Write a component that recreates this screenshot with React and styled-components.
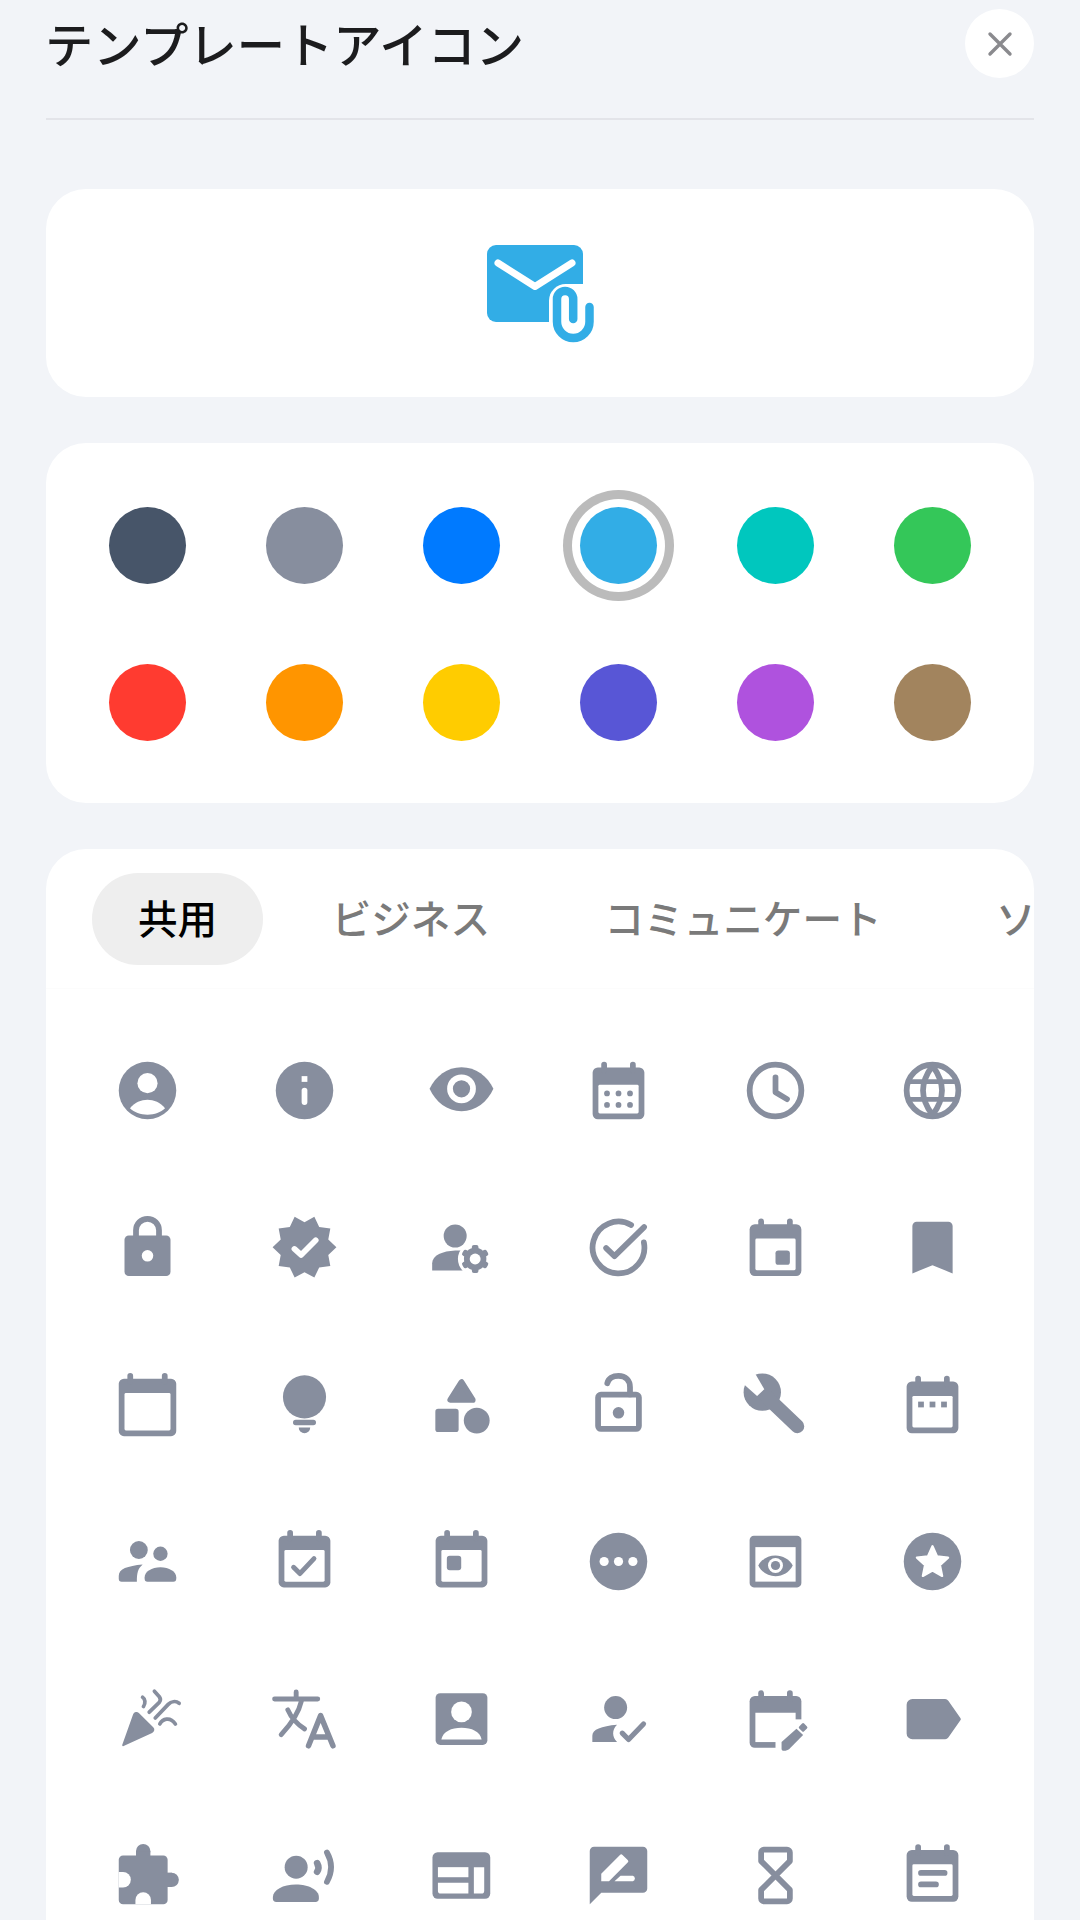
import React from "react";
import styled, { createGlobalStyle } from "styled-components";

const GlobalStyle = createGlobalStyle`
  html, body { margin: 0; padding: 0; background: #f2f4f8; }
  body { font-family: "Noto Sans CJK JP", "Noto Sans", sans-serif; }
`;

const Page = styled.div`
  width: 1080px;
  height: 1920px;
  box-sizing: border-box;
  padding: 0 46px;
  overflow: hidden;
  background: #f2f4f8;
`;
const Header = styled.header`
  height: 120px;
  box-sizing: border-box;
  display: flex;
  justify-content: space-between;
  align-items: flex-start;
  border-bottom: 2px solid #e3e4e9;
  margin-bottom: 69px;
`;
const Title = styled.h1`
  margin: 7px 0 0 -1px;
  font-size: 48.3px;
  line-height: 70px;
  font-weight: 500;
  color: #1c1c1e;
`;
const CloseButton = styled.button`
  width: 69px;
  height: 69px;
  margin-top: 9px;
  border: 0;
  padding: 0;
  border-radius: 50%;
  background: #fff;
  display: flex;
  align-items: center;
  justify-content: center;
`;
const Card = styled.section`
  background: #fff;
  border-radius: 40px;
  margin-bottom: 46px;
  overflow: hidden;
`;
const PreviewCard = styled(Card)`
  height: 208px;
  display: flex;
  align-items: center;
  justify-content: center;
`;
const SixGrid = styled.div`
  display: grid;
  grid-template-columns: repeat(6, 1fr);
  padding: 23px;
`;
const SwatchGrid = styled(SixGrid)`
  padding: 24px 23px 22px;
`;
const Cell = styled.div`
  aspect-ratio: 1;
  display: flex;
  align-items: center;
  justify-content: center;
`;
const Swatch = styled.div`
  width: 77px;
  height: 77px;
  border-radius: 50%;
  background: ${(p) => p.$color};
  box-shadow: ${(p) => (p.$selected ? "0 0 0 8px #fff, 0 0 0 17px #bbbbbb" : "none")};
`;
const Tabs = styled.nav`
  display: flex;
  gap: 22.5px;
  padding: 24px 46px 23px;
  border-bottom: 1px solid #fcfcfc;
  white-space: nowrap;
`;
const Tab = styled.div`
  flex: none;
  height: 92px;
  box-sizing: border-box;
  padding: 0 46px 6px;
  border-radius: 46px;
  display: flex;
  align-items: center;
  font-size: 39.6px;
  font-weight: 500;
  color: ${(p) => (p.$active ? "#000" : "#7a7a7a")};
  background: ${(p) => (p.$active ? "#eeeeee" : "transparent")};
`;
const Glyph = styled.svg`
  width: 69px;
  height: 69px;
  overflow: visible;
  flex: none;
`;

const G = "#878e9e";
const W = "#fff";

const Icon = ({ children }) => (
  <Glyph viewBox="0 0 24 24" fill={G}>
    {children}
  </Glyph>
);

const Cal = ({ top = 4, band = 5, children }) => (
  <>
    <rect x="3" y={top} width="18" height="18" rx="1.8" />
    <rect x="6" y={top - 2} width="2" height="4" rx="1" />
    <rect x="16" y={top - 2} width="2" height="4" rx="1" />
    <rect x="5" y={top + band} width="14" height={16 - band} rx="0.5" fill={W} />
    {children}
  </>
);

const Line = (props) => (
  <path fill="none" stroke={G} strokeWidth="2" strokeLinecap="round" strokeLinejoin="round" {...props} />
);

const polar = (cx, cy, n, R, r, start) => {
  const pts = [];
  for (let i = 0; i < n * 2; i++) {
    const a = start + (i * Math.PI) / n;
    const rad = i % 2 ? r : R;
    pts.push(`${(cx + rad * Math.cos(a)).toFixed(2)},${(cy + rad * Math.sin(a)).toFixed(2)}`);
  }
  return pts.join(" ");
};

const ICONS = [
  <>
    <circle cx="12" cy="12" r="10" />
    <circle cx="12" cy="9.45" r="3.5" fill={W} />
    <path fill={W} d="M5.9 18.2C7.5 16.2 9.8 15.25 12 15.25S16.5 16.2 18.1 18.2C16.6 19.6 14.5 20.4 12 20.4S7.4 19.6 5.9 18.2Z" />
  </>,
  <>
    <circle cx="12" cy="12" r="10" />
    <rect x="11" y="7" width="2" height="2" fill={W} />
    <rect x="11" y="11" width="2" height="6" rx="1" fill={W} />
  </>,
  <>
    <path d="M.9 11.4C3 7 7 3.9 12 3.9S21 7 23.1 11.4C21 16 17 19.2 12 19.2S3 16 .9 11.4Z" />
    <circle cx="12" cy="11.4" r="5" fill={W} />
    <circle cx="12" cy="11.4" r="3" />
  </>,
  <Cal band={6}>
    {[8, 12, 16].map((x) =>
      [13, 17].map((y) => <circle key={`${x}-${y}`} cx={x} cy={y} r="1" />)
    )}
  </Cal>,
  <>
    <circle cx="12" cy="12" r="9" fill="none" stroke={G} strokeWidth="2" />
    <Line d="M12 7.4V12.6L16 15" />
  </>,
  <>
    <circle cx="12" cy="12" r="9" fill="none" stroke={G} strokeWidth="2" />
    <Line d="M12 3.4C9.6 6.7 8.7 9.5 8.7 12S9.6 17.3 12 20.6C14.4 17.3 15.3 14.5 15.3 12S14.4 6.7 12 3.4Z" />
    <Line d="M3.7 8.9H20.3M3.7 15.1H20.3" strokeLinecap="butt" strokeWidth="1.7" />
  </>,
  <>
    <rect x="4" y="7.8" width="16" height="14.1" rx="1.5" />
    <path fill="none" stroke={G} strokeWidth="2" d="M8 9V6a4 4 0 0 1 8 0V9" />
    <circle cx="12" cy="14.9" r="2" fill={W} />
  </>,
  <>
    <polygon points={polar(12, 11.9, 10, 11.1, 8.7, 0)} strokeLinejoin="round" />
    <path fill="none" stroke={W} strokeWidth="2" strokeLinecap="round" strokeLinejoin="round" d="M8.5 12.5L10.8 14.6L15.9 9.5" />
  </>,
  <>
    <circle cx="9.8" cy="8" r="4" />
    <path d="M1.8 20V17.5C1.8 14.6 5.5 13.2 9.8 13H15V20H2.8Z" />
    <circle cx="16.75" cy="16" r="6" fill={W} />
    {[0, 60, 120].map((a) => (
      <rect key={a} x="15.6" y="11.1" width="2.3" height="9.8" rx="0.7" transform={`rotate(${a} 16.75 16)`} />
    ))}
    <circle cx="16.75" cy="16" r="3.9" />
    <circle cx="16.75" cy="16" r="1.9" fill={W} />
  </>,
  <>
    <Line d="M16.4 4.14A9 9 0 1 0 20.82 10.22" />
    <Line d="M7.7 12.2L10.6 15L20.9 4.9" />
  </>,
  <Cal top={3.9}>
    <rect x="12" y="13" width="5" height="5" rx="1" />
  </Cal>,
  <path d="M6.5 3H17.5A1.5 1.5 0 0 1 19 4.5V21L12 18.2L5 21V4.5A1.5 1.5 0 0 1 6.5 3Z" />,

  <>
    <rect x="2" y="3" width="20" height="20" rx="1.8" />
    <rect x="5" y="1" width="2" height="4" rx="1" />
    <rect x="17" y="1" width="2" height="4" rx="1" />
    <rect x="4" y="8" width="16" height="13" rx="0.5" fill={W} />
  </>,
  <>
    <circle cx="12" cy="9.35" r="7.5" />
    <rect x="8" y="17.3" width="8" height="1.9" rx="0.95" />
    <path d="M10 20H14A2 2 0 0 1 10 20Z" />
  </>,
  <>
    <polygon points="12,4.2 8.1,10.4 15.9,10.4" stroke={G} strokeWidth="2" strokeLinejoin="round" />
    <rect x="2.9" y="13.5" width="8.1" height="8.1" rx="1" />
    <circle cx="17.3" cy="17.6" r="4.5" />
  </>,
  <>
    <rect x="4.9" y="8.6" width="14.2" height="11.9" rx="1" fill="none" stroke={G} strokeWidth="2" />
    <circle cx="12" cy="14.9" r="2" />
    <Line d="M8.1 4.6C8.5 3 10 2 12 2C14.5 2 16 3.7 16 6V8.5" />
  </>,
  <>
    <circle cx="7.4" cy="7.7" r="6.5" />
    <polygon fill={W} points="0,4.1 5.6,9 8.1,6.7 4.2,0" />
    <Line d="M9 9.5L19.6 19.6" strokeWidth="4.8" />
  </>,
  <Cal>
    <rect x="7" y="11" width="2" height="2" />
    <rect x="11" y="11" width="2" height="2" />
    <rect x="15" y="11" width="2" height="2" />
  </Cal>,

  <>
    <circle cx="9" cy="8" r="3.1" />
    <circle cx="16.5" cy="9.3" r="2.5" />
    <path d="M2 18V17C2 14.5 5 13.5 10.3 13C8.6 14.5 8.3 16 8.3 19H3A1 1 0 0 1 2 18Z" />
    <path d="M11 17.5C11 15.5 13.5 14 16.5 14S22 15.5 22 17.5V18A1 1 0 0 1 21 19H12A1 1 0 0 1 11 18Z" />
  </>,
  <Cal top={3}>
    <Line d="M8.2 14L10.4 16.2L15.3 11" strokeWidth="1.7" />
  </Cal>,
  <Cal top={3}>
    <rect x="6.9" y="10" width="5" height="5" rx="1" />
  </Cal>,
  <>
    <circle cx="12" cy="12" r="10" />
    <circle cx="7" cy="12" r="1.6" fill={W} />
    <circle cx="12" cy="12" r="1.6" fill={W} />
    <circle cx="17" cy="12" r="1.6" fill={W} />
  </>,
  <>
    <rect x="3" y="3" width="18" height="18" rx="1.5" />
    <rect x="5" y="7" width="14" height="12" fill={W} />
    <path d="M6 13.4C7.2 11.2 9.5 9.9 12 9.9S16.8 11.2 18 13.4C16.8 15.8 14.5 17.1 12 17.1S7.2 15.8 6 13.4Z" />
    <circle cx="12" cy="13.4" r="2.6" fill={W} />
    <circle cx="12" cy="13.4" r="1.6" />
  </>,
  <>
    <circle cx="12" cy="12" r="10" />
    <polygon points={polar(12, 12.4, 5, 5.7, 2.7, -Math.PI / 2)} fill={W} stroke={W} strokeWidth="0.8" strokeLinejoin="round" />
  </>,

  <>
    <path d="M3.2 21.2L7 10.5A1.2 1.2 0 0 1 9 10.1L14 15A1.2 1.2 0 0 1 13.6 17L3.7 21.6A.4.4 0 0 1 3.2 21.2Z" />
    <g fill="none" stroke={G} strokeWidth="1.3" strokeLinecap="round" strokeLinejoin="round">
      <path d="M10.3 4.6C11.2 5.2 11.4 6.6 10.6 7.8" />
      <path d="M14.4 2.5L16.1 4.4C16.5 5 16.5 5.9 16.1 6.4L12.6 9.8" />
      <path d="M14.7 11.8L19.2 7.1C20.2 6.1 21.8 5.8 23 6.7" />
      <path d="M16.3 13.9C17.2 12.2 19.8 11.2 21.7 13.9" />
    </g>
  </>,
  <g fill="none" stroke={G} strokeWidth="1.7" strokeLinecap="round" strokeLinejoin="round">
    <path d="M1.6 5.2H16.6M9.1 2.8V5.2M10.9 6C10 10 8 13.2 3.9 17.6M6.2 9C7.5 12 9.5 14 12 15.6" />
    <path strokeWidth="1.9" d="M13.4 21.5L17.6 11L21.9 21.5M14.8 18.4H20.4" />
  </g>,
  <>
    <rect x="3" y="3.2" width="18" height="18" rx="1.6" />
    <circle cx="12" cy="9.7" r="3.6" fill={W} />
    <path fill={W} d="M5 19.3C5.5 16.5 8.5 15.2 12 15.2S18.5 16.5 19 19.3Z" />
  </>,
  <>
    <circle cx="11" cy="8.2" r="4" />
    <path d="M2.9 20.2V18C2.9 15.8 6 14.7 11.5 14.2C9.6 16 9.8 18.5 11.5 20.2Z" />
    <Line d="M13.3 17.1L15.5 19.3L20.7 13.9" strokeWidth="1.8" />
  </>,
  <>
    <rect x="3" y="4.2" width="18" height="18" rx="1.8" />
    <rect x="6" y="2.2" width="2" height="4" rx="1" />
    <rect x="16" y="2.2" width="2" height="4" rx="1" />
    <rect x="5" y="10" width="14" height="10.2" fill={W} />
    <rect x="12" y="12.3" width="11" height="11" fill={W} />
    <path d="M14.1 20.2L19.3 15.6L21.6 17.7L16.8 22.6C16 23.3 14.1 23.6 14.1 22.6Z" />
    <rect x="20.4" y="13.9" width="2.4" height="2.4" rx="0.5" transform="rotate(45 21.6 15.1)" />
  </>,
  <path d="M5 5.2H16.4A1.5 1.5 0 0 1 17.5 5.8L21.7 11.8A.6.6 0 0 1 21.7 12.6L17.5 18.6A1.5 1.5 0 0 1 16.4 19.2H5A2 2 0 0 1 3 17.2V7.2A2 2 0 0 1 5 5.2Z" />,

  <>
    <rect x="2" y="5" width="17" height="17" rx="1.5" />
    <circle cx="10.5" cy="3.5" r="2.5" />
    <circle cx="20.4" cy="13.5" r="2.5" />
    <rect x="8" y="3.5" width="5" height="3" />
    <rect x="17" y="11" width="3.4" height="5" />
    <path fill={W} d="M2 10.8H3.5A2.7 2.7 0 0 1 3.5 16.2H2Z" />
    <path fill={W} d="M7.8 22V20.5A2.7 2.7 0 0 1 13.2 20.5V22Z" />
  </>,
  <>
    <circle cx="9.1" cy="9.1" r="4" />
    <path d="M1 19.5C1 17 4.5 15.1 9 15.1S17 17 17 19.5V20A1.2 1.2 0 0 1 15.8 21.2H2.2A1.2 1.2 0 0 1 1 20Z" />
    <Line d="M16.4 7.7C17 8.8 17 9.8 16.4 10.7" strokeWidth="2.3" />
    <Line d="M19.8 4Q22.7 9.1 19.8 14.2" strokeWidth="2" />
  </>,
  <>
    <rect x="1.9" y="3.9" width="20.1" height="16.2" rx="1.8" />
    <rect x="3.8" y="9.1" width="10.6" height="3.5" fill={W} />
    <path fill={W} d="M3.8 14.5H14.4V18.3H4.8A1 1 0 0 1 3.8 17.3Z" />
    <path fill={W} d="M16.3 9.1H19.9V17.3A1 1 0 0 1 18.9 18.3H16.3Z" />
  </>,
  <>
    <path d="M2 22V3.5A1.5 1.5 0 0 1 3.5 2H20.5A1.5 1.5 0 0 1 22 3.5V16.5A1.5 1.5 0 0 1 20.5 18H6Z" />
    <path fill={W} d="M6 11.4L12.5 4.9A.6.6 0 0 1 13.4 4.9L15.2 6.6A.6.6 0 0 1 15.2 7.5L8.7 14H6Z" />
    <path fill={W} d="M10.6 14L12.7 12.1H17A1 1 0 0 1 17 14Z" />
  </>,
  <path
    fill="none"
    stroke={G}
    strokeWidth="2"
    strokeLinejoin="round"
    d="M8 3H16A1 1 0 0 1 17 4V7L7 17V20A1 1 0 0 0 8 21H16A1 1 0 0 0 17 20V17L7 7V4A1 1 0 0 1 8 3Z"
  />,
  <Cal top={3.1}>
    <Line d="M8 11.1H16.2M8 15.1H13.2" />
  </Cal>,
];

const SWATCHES = [
  "#475569", "#878e9e", "#007aff", "#32ade6", "#00c7be", "#34c759",
  "#ff3b30", "#ff9500", "#ffcc00", "#5856d6", "#af52de", "#a2845e",
];

const TABS = ["共用", "ビジネス", "コミュニケート", "ソーシャル"];

const PreviewIcon = () => (
  <svg width="120" height="106" viewBox="0 0 120 106">
    <rect x="7" y="5" width="96" height="77" rx="9" fill="#32ade6" />
    <path d="M18 23L55 46.5L92 23" fill="none" stroke="#fff" strokeWidth="7" strokeLinecap="round" strokeLinejoin="round" />
    <path d="M69 90V60.7A16.7 16.7 0 0 1 85.7 44H112V90Z" fill="#fff" />
    <path
      d="M109.5 67V81.75A16.25 16.25 0 0 1 77 81.75V59A8.1 8.1 0 0 1 93.2 59V79"
      fill="none"
      stroke="#32ade6"
      strokeWidth="8.5"
      strokeLinecap="round"
    />
  </svg>
);

export default function App() {
  return (
    <Page>
      <GlobalStyle />
      <Header>
        <Title>テンプレートアイコン</Title>
        <CloseButton aria-label="閉じる">
          <svg width="30" height="30" viewBox="0 0 30 30">
            <path d="M5 5L25 25M25 5L5 25" stroke="#8a8a8e" strokeWidth="3.4" strokeLinecap="round" />
          </svg>
        </CloseButton>
      </Header>
      <PreviewCard>
        <PreviewIcon />
      </PreviewCard>
      <Card>
        <SwatchGrid>
          {SWATCHES.map((c, i) => (
            <Cell key={c}>
              <Swatch $color={c} $selected={i === 3} />
            </Cell>
          ))}
        </SwatchGrid>
      </Card>
      <Card>
        <Tabs>
          {TABS.map((t, i) => (
            <Tab key={t} $active={i === 0}>
              {t}
            </Tab>
          ))}
        </Tabs>
        <SixGrid>
          {ICONS.map((icon, i) => (
            <Cell key={i}>
              <Icon>{icon}</Icon>
            </Cell>
          ))}
        </SixGrid>
      </Card>
    </Page>
  );
}
